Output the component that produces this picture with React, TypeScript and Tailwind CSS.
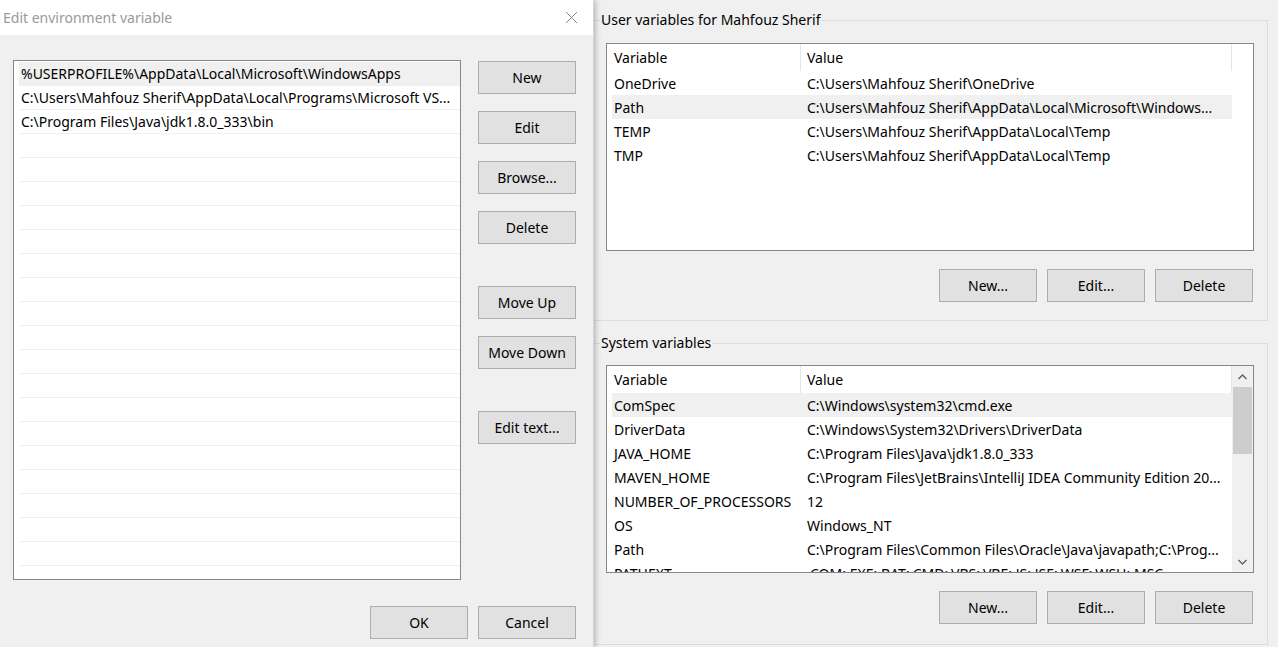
import type { ReactNode } from 'react'

const FONT = "font-['Noto_Sans',sans-serif]"

const pathEntries = [
  '%USERPROFILE%\\AppData\\Local\\Microsoft\\WindowsApps',
  'C:\\Users\\Mahfouz Sherif\\AppData\\Local\\Programs\\Microsoft VS...',
  'C:\\Program Files\\Java\\jdk1.8.0_333\\bin',
]

const userVars = [
  ['OneDrive', 'C:\\Users\\Mahfouz Sherif\\OneDrive'],
  ['Path', 'C:\\Users\\Mahfouz Sherif\\AppData\\Local\\Microsoft\\Windows...'],
  ['TEMP', 'C:\\Users\\Mahfouz Sherif\\AppData\\Local\\Temp'],
  ['TMP', 'C:\\Users\\Mahfouz Sherif\\AppData\\Local\\Temp'],
]

const systemVars = [
  ['ComSpec', 'C:\\Windows\\system32\\cmd.exe'],
  ['DriverData', 'C:\\Windows\\System32\\Drivers\\DriverData'],
  ['JAVA_HOME', 'C:\\Program Files\\Java\\jdk1.8.0_333'],
  ['MAVEN_HOME', 'C:\\Program Files\\JetBrains\\IntelliJ IDEA Community Edition 20...'],
  ['NUMBER_OF_PROCESSORS', '12'],
  ['OS', 'Windows_NT'],
  ['Path', 'C:\\Program Files\\Common Files\\Oracle\\Java\\javapath;C:\\Prog...'],
  ['PATHEXT', '.COM;.EXE;.BAT;.CMD;.VBS;.VBE;.JS;.JSE;.WSF;.WSH;.MSC'],
]

function WinButton({ label, className = '' }: { label: string; className?: string }) {
  return (
    <button
      type="button"
      className={`h-[33px] w-[98px] shrink-0 border border-[#adadad] bg-[#e1e1e1] text-[14px] leading-none text-black ${className}`}
    >
      {label}
    </button>
  )
}

function GroupBox({ label, children, className = '' }: { label: string; children: ReactNode; className?: string }) {
  return (
    <div className={`mr-[10px] border-t border-r border-b border-[#dcdcdc] ${className}`}>
      <div className="-mt-[11px] ml-[7px] w-fit bg-[#f0f0f0] px-px text-[14px] leading-[20px] text-black">
        {label}
      </div>
      {children}
    </div>
  )
}

function VarTable({ rows, selected, scroll }: { rows: string[][]; selected: number; scroll?: boolean }) {
  return (
    <div className="ml-[13px] flex h-[208px] w-[648px] overflow-hidden border border-[#828790] bg-white">
      <div className="ml-[5px] w-[620px] shrink-0 overflow-hidden">
        <div className="flex h-[27px] items-center text-[14px] text-black">
          <div className="flex h-full w-[189px] shrink-0 items-center border-r border-[#e5e5e5] pl-[2px]">
            Variable
          </div>
          <div className="flex h-full flex-1 items-center border-r border-[#e5e5e5] pl-[6px]">Value</div>
        </div>
        {rows.map(([name, value], i) => (
          <div
            key={name + i}
            className={`flex h-[24px] items-center text-[14px] text-black ${i === selected ? 'bg-[#f0f0f0]' : ''}`}
          >
            <div className="w-[190px] shrink-0 truncate pl-[2px]">{name}</div>
            <div className="flex-1 truncate whitespace-nowrap pl-[5px] pr-[4px]">{value}</div>
          </div>
        ))}
      </div>
      {scroll ? (
        <div className="flex w-[21px] shrink-0 flex-col bg-[#f0f0f0]">
          <div className="flex h-[21px] items-center justify-center">
            <svg width="9" height="6" viewBox="0 0 9 6">
              <path d="M0.5 5 L4.5 1 L8.5 5" fill="none" stroke="#606060" strokeWidth="1.4" />
            </svg>
          </div>
          <div className="mx-[1px] h-[67px] bg-[#cdcdcd]" />
          <div className="flex-1" />
          <div className="flex h-[21px] items-center justify-center">
            <svg width="9" height="6" viewBox="0 0 9 6">
              <path d="M0.5 1 L4.5 5 L8.5 1" fill="none" stroke="#606060" strokeWidth="1.4" />
            </svg>
          </div>
        </div>
      ) : null}
    </div>
  )
}

export default function App() {
  const listRows = Array.from({ length: 22 }, (_, i) => pathEntries[i] ?? '')

  return (
    <div className={`flex h-[647px] w-[1278px] overflow-hidden bg-[#f0f0f0] ${FONT}`}>
      {/* Edit dialog */}
      <div className="relative z-10 flex h-full w-[593px] shrink-0 flex-col bg-[#f0f0f0] shadow-[1px_0_0_#d6d6d6,2px_0_6px_rgba(0,0,0,0.3)]">
        <div className="flex h-[35px] shrink-0 items-center justify-between bg-white pl-[3px] pr-[15px]">
          <span className="text-[14px] text-[#9a9a9a]">Edit environment variable</span>
          <svg width="13" height="13" viewBox="0 0 13 13">
            <path d="M1 1 L12 12 M12 1 L1 12" stroke="#888" strokeWidth="1" />
          </svg>
        </div>
        <div className="flex pl-[13px] pt-[25px]">
          <div className="h-[520px] w-[448px] overflow-hidden border border-[#828790] bg-white pt-px">
            {listRows.map((entry, i) => (
              <div
                key={i}
                className={`ml-[5px] flex h-[24px] items-center border-b border-[#f0f0f0] pl-[2px] text-[14px] text-black ${i === 0 ? 'bg-[#f0f0f0]' : ''}`}
              >
                <span className="truncate">{entry}</span>
              </div>
            ))}
          </div>
          <div className="ml-[17px] flex flex-col pt-px">
            <WinButton label="New" />
            <WinButton label="Edit" className="mt-[17px]" />
            <WinButton label="Browse..." className="mt-[17px]" />
            <WinButton label="Delete" className="mt-[17px]" />
            <WinButton label="Move Up" className="mt-[42px]" />
            <WinButton label="Move Down" className="mt-[17px]" />
            <WinButton label="Edit text..." className="mt-[42px]" />
          </div>
        </div>
        <div className="mt-[26px] flex justify-end gap-[10px] pr-[17px]">
          <WinButton label="OK" />
          <WinButton label="Cancel" />
        </div>
      </div>

      {/* Environment variables window */}
      <div className="flex flex-1 flex-col">
        <GroupBox label="User variables for Mahfouz Sherif" className="mt-[20px] pb-[18px]">
          <div className="mt-[13px]">
            <VarTable rows={userVars} selected={1} />
          </div>
          <div className="mt-[18px] flex justify-end gap-[10px] pr-[14px]">
            <WinButton label="New..." />
            <WinButton label="Edit..." />
            <WinButton label="Delete" />
          </div>
        </GroupBox>
        <GroupBox label="System variables" className="mt-[22px] pb-[20px]">
          <div className="mt-[12px]">
            <VarTable rows={systemVars} selected={0} scroll />
          </div>
          <div className="mt-[18px] flex justify-end gap-[10px] pr-[14px]">
            <WinButton label="New..." />
            <WinButton label="Edit..." />
            <WinButton label="Delete" />
          </div>
        </GroupBox>
      </div>
    </div>
  )
}
